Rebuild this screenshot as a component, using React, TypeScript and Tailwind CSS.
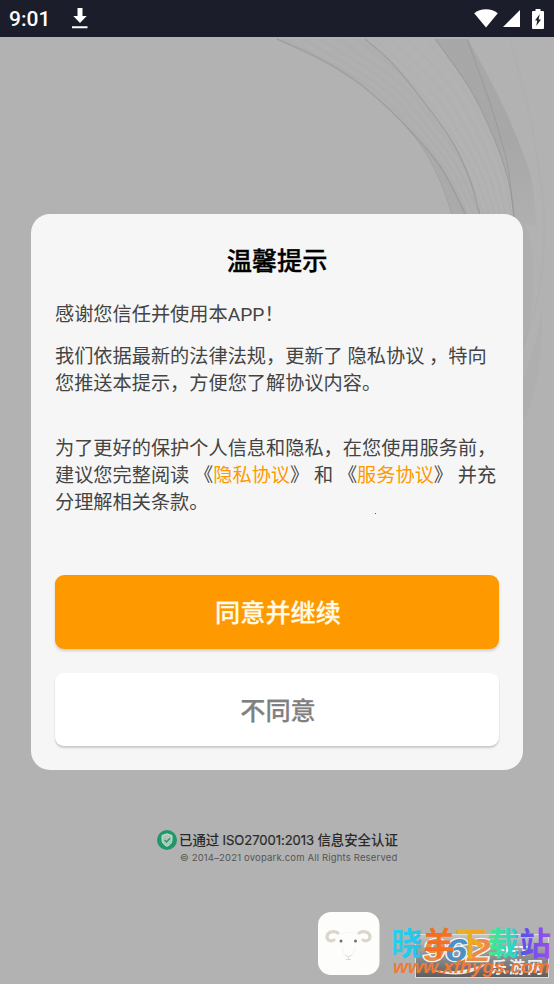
import type { ReactNode } from 'react';

type Point = [number, number];

// Catmull-Rom through the points, written as cubic segments
function curve(points: Point[]) {
  let d = `M${points[0][0]} ${points[0][1]}`;
  for (let i = 0; i < points.length - 1; i++) {
    const p0 = points[i - 1] ?? points[i];
    const p1 = points[i];
    const p2 = points[i + 1];
    const p3 = points[i + 2] ?? p2;
    d += ` C${p1[0] + (p2[0] - p0[0]) / 6} ${p1[1] + (p2[1] - p0[1]) / 6}`;
    d += ` ${p2[0] - (p3[0] - p1[0]) / 6} ${p2[1] - (p3[1] - p1[1]) / 6} ${p2[0]} ${p2[1]}`;
  }
  return d;
}

const outer: Point[] = [[277, 2], [320, 22], [360, 47], [403, 86], [440, 129], [466, 178]];
const split: Point[] = [[403, 86], [420, 107], [433, 129], [444, 154], [452, 178]];
const middle: Point[] = [[365, 2], [393, 27], [427, 69], [453, 106], [469, 140], [480, 178]];
const inner: Point[] = [[435, 2], [470, 52], [493, 99], [508, 142], [515, 184]];
const fold: Point[] = [[467, 2], [490, 66], [502, 106], [509, 136], [514, 184]];
const rim: Point[] = [[468, 2], [500, 62], [523, 116], [532, 145], [537, 190]];
const far: Point[] = [[510, 2], [527, 66], [537, 119], [544, 180], [540, 250], [523, 310]];

const strands: { points: Point[]; stroke: string; width: number; opacity: number }[] = [
  { points: outer, stroke: '#8a8a8a', width: 2.2, opacity: 0.2 },
  { points: outer, stroke: '#7c7c7c', width: 0.7, opacity: 0.4 },
  { points: split, stroke: '#8a8a8a', width: 0.8, opacity: 0.4 },
  { points: middle, stroke: '#8a8a8a', width: 2, opacity: 0.2 },
  { points: middle, stroke: '#7c7c7c', width: 0.7, opacity: 0.4 },
  { points: inner, stroke: '#8a8a8a', width: 1.2, opacity: 0.4 },
  { points: fold, stroke: '#858585', width: 0.9, opacity: 0.45 },
  { points: far, stroke: '#a0a0a0', width: 1.5, opacity: 0.15 },
];

const weave = Array.from({ length: 17 }, (_, i) => (i + 1) / 18);

// strand that lies between the outer and the inner one
function between(t: number): Point[] {
  return inner.map(([x, y], i) => {
    const [ox, oy] = [outer[0], outer[2], outer[3], outer[4], outer[5]][i];
    return [ox + (x - ox) * t, oy + (y - oy) * t];
  });
}

function area(a: Point[], b: Point[]) {
  return `${curve(a)} ${curve([...b].reverse()).replace('M', 'L')} Z`;
}

function Backdrop() {
  return (
    <svg className="absolute inset-0 h-full w-full" viewBox="0 0 554 947" fill="none">
      <defs>
        <linearGradient id="fade" x1="0" y1="0" x2="0" y2="190" gradientUnits="userSpaceOnUse">
          <stop stopColor="#999" stopOpacity="0.42" />
          <stop offset=".55" stopColor="#999" stopOpacity="0.42" />
          <stop offset="1" stopColor="#999" stopOpacity="0.1" />
        </linearGradient>
      </defs>
      <path d={area(outer, middle)} fill="#a9a9a9" opacity="0.25" />
      <path d={area(outer.slice(3), split)} fill="#999" opacity="0.3" />
      <path d={area(inner, rim)} fill="url(#fade)" />
      <path d="M523 185 C540 210 534 280 523 312 Z" fill="#a6a6a6" opacity="0.25" />
      <path d="M523 340 C532 320 538 300 542 270 C542 330 536 360 523 384 Z" fill="#a8a8a8" opacity="0.3" />
      {weave.map((t, i) => (
        <path
          key={t}
          d={curve(between(t))}
          stroke={i % 2 ? '#bcbcbc' : '#a3a3a3'}
          strokeWidth="0.8"
          opacity="0.3"
        />
      ))}
      {strands.map((s, i) => (
        <path key={i} d={curve(s.points)} stroke={s.stroke} strokeWidth={s.width} opacity={s.opacity} />
      ))}
    </svg>
  );
}

function StatusBar() {
  return (
    <header className="flex h-[37px] shrink-0 items-center justify-between bg-[#1c1d2b] text-white">
      <div className="flex items-center pl-[9px]">
        <span className="w-[63px] pt-0.5 font-[Roboto] text-[21px] leading-none font-medium">9:01</span>
        <svg className="h-[22px] w-4" viewBox="0 0 16 22" fill="currentColor">
          <path d="M5.5 0h5v8h4.2L8 15 1.3 8h4.2zM0 18.3h15.5v2H0z" />
        </svg>
      </div>
      <div className="flex items-center pr-2.5">
        <svg className="h-[19px] w-6" viewBox="0 0 24 19" fill="currentColor">
          <path d="M12 18.500.2 4.2C3.5 1.6 7.3.3 12 .3s8.500 1.300 11.800 3.900z" />
        </svg>
        <svg className="ml-[5px] h-[17px] w-[17px]" viewBox="0 0 17 17" fill="currentColor">
          <path d="M17 0v17H0z" />
        </svg>
        <svg className="ml-3 h-5 w-3" viewBox="0 0 12 20">
          <path d="M3.500 0h5v2H11a1 1 0 0 1 1 1v16a1 1 0 0 1-1 1H1a1 1 0 0 1-1-1V3a1 1 0 0 1 1-1h2.500z" fill="#fff" />
          <path d="M7.800 5 3 11.500h2.300L4.200 17 9 10.500H6.600z" fill="#1c1d2b" />
        </svg>
      </div>
    </header>
  );
}

function Link({ children }: { children: ReactNode }) {
  return <a className="text-[#ff9900]">{children}</a>;
}

function ConsentDialog() {
  return (
    <section className="relative mx-[31px] mt-[177px] flex h-[556px] flex-col rounded-[19px] bg-[#f6f6f6] px-6 text-[19.210px] leading-[27px] text-[#444]">
      <h1 className="mt-[30px] text-center text-[25.200px] leading-9 font-medium text-black [-webkit-text-stroke:0.35px_black]">
        温馨提示
      </h1>
      <p className="mt-[21px] whitespace-nowrap">感谢您信任并使用本APP！</p>
      <p className="mt-[15px] whitespace-nowrap">
        我们依据最新的法律法规，更新了 隐私协议 ，特向
        <br />
        您推送本提示，方便您了解协议内容。
      </p>
      <p className="mt-[38px] whitespace-nowrap">
        为了更好的保护个人信息和隐私，在您使用服务前，
        <br />
        建议您完整阅读 《<Link>隐私协议</Link>》 和 《<Link>服务协议</Link>》 并充
        <br />
        分理解相关条款。
      </p>
      <i className="mt-[-3px] ml-80 block h-px w-px shrink-0 bg-[#555]" />
      <button className="mt-[61px] h-[74px] shrink-0 rounded-[9px] bg-[#ff9900] pt-0.5 pl-0.5 text-[25.200px] font-medium text-[#fffbe8] shadow-[0_2px_3px_rgba(0,0,0,0.16)] [-webkit-text-stroke:0.25px]">
        同意并继续
      </button>
      <button className="mt-6 h-[73px] shrink-0 rounded-[9px] bg-white pt-[3px] pl-0.5 text-[25.200px] font-medium text-[#808080] shadow-[0_2px_2px_rgba(0,0,0,0.18)] [-webkit-text-stroke:0.25px]">
        不同意
      </button>
    </section>
  );
}

function Certification() {
  return (
    <div className="relative mt-[60px] ml-[157px] flex">
      <svg className="h-5 w-5" viewBox="0 0 20 20" fill="none">
        <circle cx="10" cy="10" r="10" fill="#219868" />
        <path d="m10 3.800 5 1.700v4.300c0 3-2 5.200-5 6.500-3-1.300-5-3.500-5-6.500V5.500z" fill="#a9c8b8" stroke="#d0ddd5" />
        <path d="m7.500 10 2 2 3.500-3.800" stroke="#219868" strokeWidth="1.300" />
      </svg>
      <div className="-mt-px ml-0.5 whitespace-nowrap">
        <p className="text-[13.400px] leading-[22px] font-medium text-[#292929]">
          已通过 <span className="font-[Inter] text-[13.100px] font-normal tracking-[-0.06px] [-webkit-text-stroke:0.2px]">ISO27001:2013</span> 信息安全认证
        </p>
        <p className="ml-px font-[Inter] text-[9.500px] leading-3 tracking-[0.17px] text-[#555]">
          © 2014–2021 ovopark.com All Rights Reserved
        </p>
      </div>
    </div>
  );
}

function SheepLogo() {
  return (
    <svg className="absolute top-[875px] left-[318px] h-[63px] w-[62px]" viewBox="0 0 62 63" fill="none">
      <rect width="61.500" height="63" rx="13" fill="#fdfdfc" />
      <path d="M20 21c-4-3-11-1-11 4 0 3 4 5 7 3M41 21c4-3 11-1 11 4 0 3-4 5-7 3" stroke="#dad6c8" strokeWidth="3.200" strokeLinecap="round" />
      <path d="M21 22q9-3 19 0M24 34q1 8 4 11M37 34q-1 8-4 11" stroke="#f6f5f4" strokeWidth="1.200" />
      <circle cx="23" cy="29" r="1.500" fill="#6d7176" />
      <circle cx="37.500" cy="29" r="1.500" fill="#6d7176" />
      <path d="m27.500 43 3 2 3-2M30.500 45v2.500M28 47.500h5" stroke="#ddd7d4" />
    </svg>
  );
}

function Watermark() {
  return (
    <svg className="absolute top-[885px] left-[388px] h-[62px] w-[166px] overflow-visible" viewBox="0 0 166 62">
      <defs>
        <linearGradient id="plate" x1="0" y1="0" x2="0" y2="1">
          <stop stopColor="#c4c4c4" />
          <stop offset="1" stopColor="#5c5c5c" />
        </linearGradient>
        <linearGradient id="name" x1="4" x2="162" y1="0" y2="0" gradientUnits="userSpaceOnUse">
          <stop offset="0" stopColor="#21d3ee" />
          <stop offset=".17" stopColor="#22c5f0" />
          <stop offset=".21" stopColor="#f36b24" />
          <stop offset=".38" stopColor="#f3741f" />
          <stop offset=".42" stopColor="#eab21c" />
          <stop offset=".58" stopColor="#f1a326" />
          <stop offset=".62" stopColor="#45e88b" />
          <stop offset=".78" stopColor="#29d5cb" />
          <stop offset=".82" stopColor="#5553ed" />
          <stop offset="1" stopColor="#9f4bef" />
        </linearGradient>
      </defs>
      <rect x="27.500" y="12.500" width="133" height="43" fill="url(#plate)" stroke="#ddd" />
      <path d="M32 43q25 14 68-2-28 22-68 2" fill="#e8e8e8" />
      <g fontFamily="Liberation Sans" fontSize="32" fontWeight="700" fontStyle="italic" stroke="#f5f5f5" strokeWidth="2.500" paintOrder="stroke">
        <text x="35" y="39" fill="#e98c49" textLength="22" lengthAdjust="spacingAndGlyphs">9</text>
        <text x="57" y="39" fill="#4e8fc6" textLength="22" lengthAdjust="spacingAndGlyphs">6</text>
        <text x="79" y="39" fill="#e98c49" textLength="24" lengthAdjust="spacingAndGlyphs">2</text>
      </g>
      <text x="106" y="34" fontFamily="Liberation Sans" fontSize="15" fontWeight="700" fill="#fff">.NET</text>
      <text x="103" y="51" fontFamily="Noto Sans CJK SC" fontSize="16" fontWeight="700" fill="#eee" textLength="52">乐游网</text>
      <text x="3" y="33" fontFamily="Noto Sans CJK SC" fontSize="31.800" fontWeight="700" fill="url(#name)" textLength="160">晓羊下载站</text>
      <text x="5" y="51" fontFamily="Liberation Sans" fontSize="19" fontWeight="700" fontStyle="italic" fill="#f07a35" textLength="157" lengthAdjust="spacingAndGlyphs">www.xfhygs.com</text>
    </svg>
  );
}

export default function App() {
  return (
    <div className="flex h-[984px] w-[554px] flex-col overflow-hidden bg-[#b2b2b2] font-[Roboto,'Noto_Sans_CJK_SC',sans-serif]">
      <StatusBar />
      <main className="relative flex flex-1 flex-col">
        <Backdrop />
        <ConsentDialog />
        <Certification />
        <SheepLogo />
        <Watermark />
      </main>
    </div>
  );
}
